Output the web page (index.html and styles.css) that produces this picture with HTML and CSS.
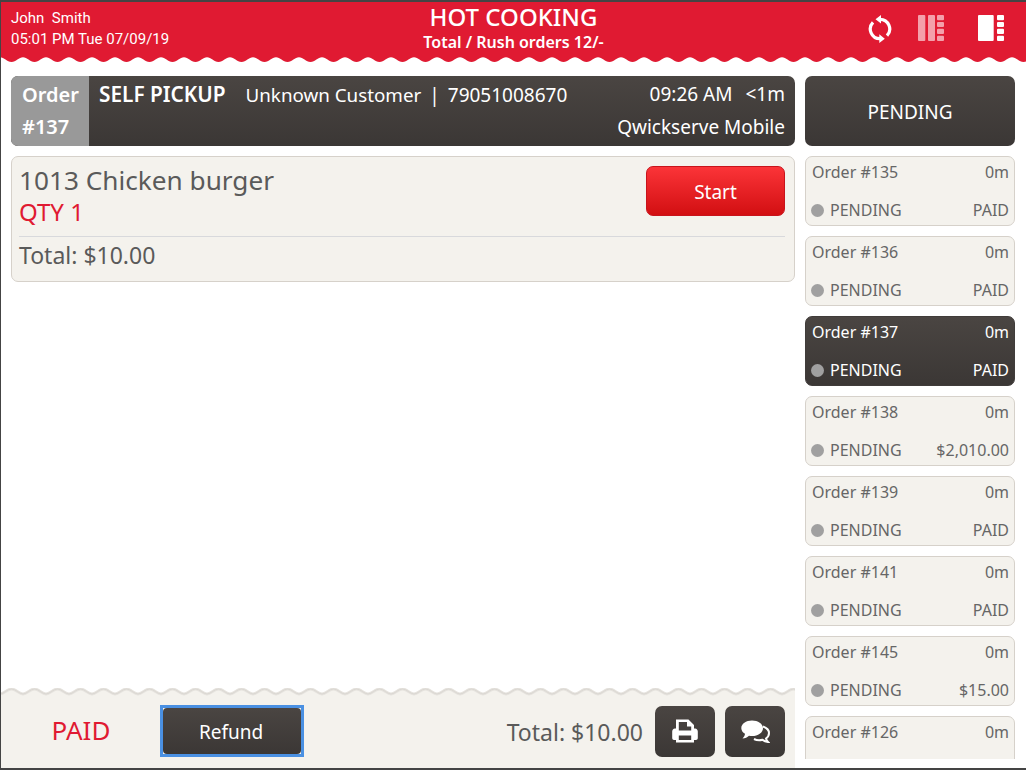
FILE: index.html
```html
<!DOCTYPE html>
<html lang="en">
<head>
<meta charset="utf-8">
<title>Hot Cooking</title>
<link rel="stylesheet" href="styles.css">
</head>
<body>
<div class="app">
  <svg width="0" height="0" class="defs">
    <defs>
      <pattern id="wave-red" width="23" height="8" patternUnits="userSpaceOnUse" patternTransform="translate(-1 0)">
        <path d="M0 0.300C4 0.300 7 5 11.500 5S19 0.300 23 0.300V0H0Z" fill="#e01a32"/>
      </pattern>
      <pattern id="wave-foot" width="23" height="8" patternUnits="userSpaceOnUse" patternTransform="translate(-1 0)">
        <path d="M0 6C4 6 7 1 11.500 1S19 6 23 6V8H0Z" fill="#f4f2ed"/>
        <path d="M0 6C4 6 7 1 11.500 1S19 6 23 6" fill="none" stroke="#e6e3de" stroke-width="3"/>
        <path d="M0 6C4 6 7 1 11.500 1S19 6 23 6" fill="none" stroke="#dad7d2" stroke-width="1"/>
      </pattern>
    </defs>
  </svg>
  <header class="top">
    <div class="top-main">
      <div class="user">
        <div>John&nbsp; Smith</div>
        <div>05:01 PM Tue 07/09/19</div>
      </div>
      <div class="title">
        <div class="title-big">HOT COOKING</div>
        <div class="title-small">Total / Rush orders 12/-</div>
      </div>
      <div class="top-icons">
        <svg class="i-sync" width="24" height="29" viewBox="0 0 24 29">
          <path d="M12 4.300A9.700 9.700 0 0 1 19 20.700" fill="none" stroke="#fff" stroke-width="3.200"/>
          <path d="M12 23.700A9.700 9.700 0 0 1 5 7.300" fill="none" stroke="#fff" stroke-width="3.200"/>
          <path d="M7.500 4.300L13 0V8.600Z M16.800 23.700L11.300 19.300V28Z" fill="#fff"/>
        </svg>
        <svg class="i-cols dim" width="26" height="26" viewBox="0 0 26 26">
          <rect x="0" y="0" width="7.300" height="26" rx="1" fill="#f4a0ab"/>
          <rect x="10" y="0" width="7" height="26" rx="1" fill="#f4a0ab"/>
          <rect x="19" y="0" width="7" height="5.200" rx="1" fill="#f4a0ab"/>
          <rect x="19" y="6.900" width="7" height="5.200" rx="1" fill="#f4a0ab"/>
          <rect x="19" y="13.800" width="7" height="5.200" rx="1" fill="#f4a0ab"/>
          <rect x="19" y="20.800" width="7" height="5.200" rx="1" fill="#f4a0ab"/>
        </svg>
        <svg class="i-cols" width="26" height="26" viewBox="0 0 26 26">
          <rect x="0" y="0" width="15.700" height="26" rx="1" fill="#fff"/>
          <rect x="19" y="0" width="7" height="5.200" rx="1" fill="#fff"/>
          <rect x="19" y="6.900" width="7" height="5.200" rx="1" fill="#fff"/>
          <rect x="19" y="13.800" width="7" height="5.200" rx="1" fill="#fff"/>
          <rect x="19" y="20.800" width="7" height="5.200" rx="1" fill="#fff"/>
        </svg>
      </div>
    </div>
    <svg class="wave" width="100%" height="6"><rect width="100%" height="6" fill="url(#wave-red)"/></svg>
  </header>
  <div class="body">
    <main class="left">
      <section class="order-bar">
        <div class="order-tag"><div>Order</div><div>#137</div></div>
        <div class="order-info">
          <div class="info-row">
            <div class="info-left"><b class="pickup">SELF PICKUP</b><span class="cust">Unknown Customer</span><span class="sep">|</span><span>79051008670</span></div>
            <div><span class="time">09:26 AM</span><span>&lt;1m</span></div>
          </div>
          <div class="info-row end"><div>Qwickserve Mobile</div></div>
        </div>
      </section>
      <section class="item-card">
        <div class="item-top">
          <div>
            <div class="item-name">1013 Chicken burger</div>
            <div class="item-qty">QTY 1</div>
          </div>
          <button class="btn-start">Start</button>
        </div>
        <div class="item-total">Total: $10.00</div>
      </section>
      <div class="spacer"></div>
      <footer class="foot">
        <svg class="wave" width="100%" height="8"><rect width="100%" height="8" fill="url(#wave-foot)"/></svg>
        <div class="foot-row">
          <div class="paid">PAID</div>
          <button class="btn-refund"><span class="refund-in">Refund</span></button>
          <div class="foot-total">Total: $10.00</div>
          <button class="btn-icon" aria-label="Print">
            <svg width="26" height="24" viewBox="0 0 26 24">
              <path fill-rule="evenodd" fill="#fff" d="M4 0.500H16.500L22 6V9.500H23C24.800 9.500 25.800 11 25.800 12.500V19C25.800 20.300 25 21 24 21H22V23.500H4V21H2C1 21 0.200 20.300 0.200 19V12.500C0.200 11 1.200 9.500 3 9.500H4ZM6.800 3V11.500H19.200V7.500H15V3ZM6.800 16.500V21H19.200V16.500Z"/>
            </svg>
          </button>
          <button class="btn-icon" aria-label="Comments">
            <svg width="29" height="23" viewBox="0 0 29 23">
              <path fill="none" stroke="#fff" stroke-width="2" d="M22 6.500C26 8 28 10.500 28 13C28 15.500 26.500 17.500 25 18.500C25.300 20 26 21 27 22C24.800 21.800 22.800 21 21.500 19.800C19 20.500 15.500 20.300 13 19"/>
              <path fill="#fff" d="M11 0.500C17 0.500 22 3.800 22 8.200S17 16 11 16C10 16 9 15.900 8 15.700C6.500 17.300 4 18.300 1.500 18.500C3 17 3.800 15.500 4 13.800C1.800 12.500 0.300 10.400 0.300 8.200C0.300 3.800 5 0.500 11 0.500Z"/>
            </svg>
          </button>
        </div>
      </footer>
    </main>
    <aside class="right">
      <button class="btn-pending">PENDING</button>
      <div class="list">
        <article class="tile"><div class="t-row"><span>Order #135</span><span>0m</span></div><div class="t-row"><span class="st"><i class="dot"></i>PENDING</span><span>PAID</span></div></article>
        <article class="tile"><div class="t-row"><span>Order #136</span><span>0m</span></div><div class="t-row"><span class="st"><i class="dot"></i>PENDING</span><span>PAID</span></div></article>
        <article class="tile active"><div class="t-row"><span>Order #137</span><span>0m</span></div><div class="t-row"><span class="st"><i class="dot"></i>PENDING</span><span>PAID</span></div></article>
        <article class="tile"><div class="t-row"><span>Order #138</span><span>0m</span></div><div class="t-row"><span class="st"><i class="dot"></i>PENDING</span><span>$2,010.00</span></div></article>
        <article class="tile"><div class="t-row"><span>Order #139</span><span>0m</span></div><div class="t-row"><span class="st"><i class="dot"></i>PENDING</span><span>PAID</span></div></article>
        <article class="tile"><div class="t-row"><span>Order #141</span><span>0m</span></div><div class="t-row"><span class="st"><i class="dot"></i>PENDING</span><span>PAID</span></div></article>
        <article class="tile"><div class="t-row"><span>Order #145</span><span>0m</span></div><div class="t-row"><span class="st"><i class="dot"></i>PENDING</span><span>$15.00</span></div></article>
        <article class="tile"><div class="t-row"><span>Order #126</span><span>0m</span></div></article>
      </div>
    </aside>
  </div>
</div>
</body>
</html>
```

FILE: styles.css
```css
* { box-sizing: border-box; }
html, body { margin: 0; padding: 0; background: #fff; overflow: hidden; }
body { font-family: "Noto Sans", "Open Sans", sans-serif; color: #5a5a5a; }
button { font-family: inherit; cursor: pointer; }
.defs { position: absolute; }
.app {
  width: 1026px; height: 770px;
  border: 1px solid #444; border-top-width: 2px; border-bottom-width: 2px; border-right-width: 0;
  display: flex; flex-direction: column;
  overflow: hidden;
}
.top { flex: none; }
.top-main {
  height: 55px; background: #e01a32; color: #fff;
  display: grid; grid-template-columns: 1fr 1fr 1fr; align-items: start;
}
.wave { display: block; }
.user { font-family: Roboto, sans-serif; font-size: 15px; line-height: 21px; padding: 6px 0 0 10px; white-space: nowrap; }
.title { text-align: center; width: 340px; justify-self: center; }
.title-big { font-size: 24px; line-height: 30px; font-weight: 500; }
.title-small { font-size: 16px; line-height: 20px; font-weight: 600; }
.top-icons { display: flex; justify-content: flex-end; align-items: flex-start; padding: 13px 22px 0 0; }
.i-sync { margin: 0 26px 0 0; }
.i-cols.dim { margin-right: 34px; }
.body { flex: 1; display: flex; min-height: 0; }
.left { width: 794px; flex: none; display: flex; flex-direction: column; padding-top: 13px; }
.order-bar {
  margin-left: 10px; height: 70px; flex: none; border-radius: 7px; overflow: hidden; display: flex;
  background: linear-gradient(#4a4542, #3b3735); color: #fff; font-size: 19px;
}
.order-tag { width: 78px; background: #999; padding: 3px 0 0 11px; font-weight: 600; font-size: 20px; line-height: 32px; }
.order-info { flex: 1; padding: 2px 10px 0; display: flex; flex-direction: column; }
.info-row { display: flex; justify-content: space-between; line-height: 32px; white-space: nowrap; }
.info-row.end { justify-content: flex-end; }
.pickup { font-weight: 600; font-size: 20.800px; margin-right: 20px; }
.cust { font-size: 18.800px; }
.sep { margin: 0 8px; }
.time { margin-right: 13px; }
.item-card {
  margin: 10px 0 0 10px; height: 126px; flex: none; background: #f4f2ed; border: 1px solid #d6d1ca; border-radius: 7px;
  padding: 7px 9px 0 7px;
}
.item-top { display: flex; justify-content: space-between; height: 73px; border-bottom: 1px solid #d8d9dc; }
.item-name { font-size: 26.200px; line-height: 32px; color: #5a5a5a; }
.item-qty { font-size: 24px; line-height: 32px; color: #e01a32; }
.btn-start {
  width: 139px; height: 50px; margin-top: 2px; padding: 2px 0 0; border: 1px solid #c8141c; border-radius: 7px; color: #fff; font-size: 19px;
  background: linear-gradient(#fb3438, #d20f12);
}
.item-total { font-size: 23px; line-height: 36px; }
.spacer { flex: 1; }
.foot { flex: none; height: 80px; background: linear-gradient(#fff 0 6px, #f4f2ed 6px); }
.foot-row { display: flex; align-items: center; height: 72px; padding: 0 10px 2px 0; }
.paid { width: 159px; padding: 0 0 2px 1px; text-align: center; font-size: 26px; color: #e01a32; }
.btn-refund {
  width: 144px; height: 52px; border: 3px solid #4a90e2; border-radius: 0; padding: 0; color: #fff; font-size: 19px;
  background: #f4f2ed; display: flex;
}
.refund-in { flex: 1; display: flex; align-items: center; justify-content: center; padding: 2px 2px 0 0; border-radius: 4px; background: linear-gradient(#4a4542, #3b3735); }
.foot-total { flex: 1; text-align: right; font-size: 23px; padding: 2px 2px 0 0; }
.btn-icon {
  width: 60px; height: 51px; border: 0; border-radius: 7px; margin-left: 10px; padding: 0; flex: none;
  background: linear-gradient(#4a4542, #3b3735); display: flex; align-items: center; justify-content: center;
}
.right { width: 221px; flex: none; padding: 13px 0 0 10px; display: flex; flex-direction: column; min-height: 0; }
.btn-pending {
  width: 210px; height: 70px; flex: none; border: 0; padding: 2px 0 0; border-radius: 7px; color: #fff; font-size: 19px;
  background: linear-gradient(#4a4542, #3b3735);
}
.list { margin-top: 10px; width: 210px; height: 603px; overflow: hidden; display: flex; flex-direction: column; gap: 10px; }
.tile {
  flex: none; height: 70px; background: #f4f2ed; border: 1px solid #d6d1ca; border-radius: 7px;
  padding: 3px 5px 3px 6px; font-size: 16px; display: flex; flex-direction: column; justify-content: space-between;
  color: #666;
}
.tile.active { background: linear-gradient(#4a4542, #3b3735); border-color: #403c3a; color: #fff; }
.t-row { display: flex; justify-content: space-between; line-height: 24px; }
.st { display: flex; align-items: center; margin-left: -1px; }
.dot { width: 13px; height: 13px; border-radius: 50%; background: #a0a0a0; margin-right: 6px; }
```
